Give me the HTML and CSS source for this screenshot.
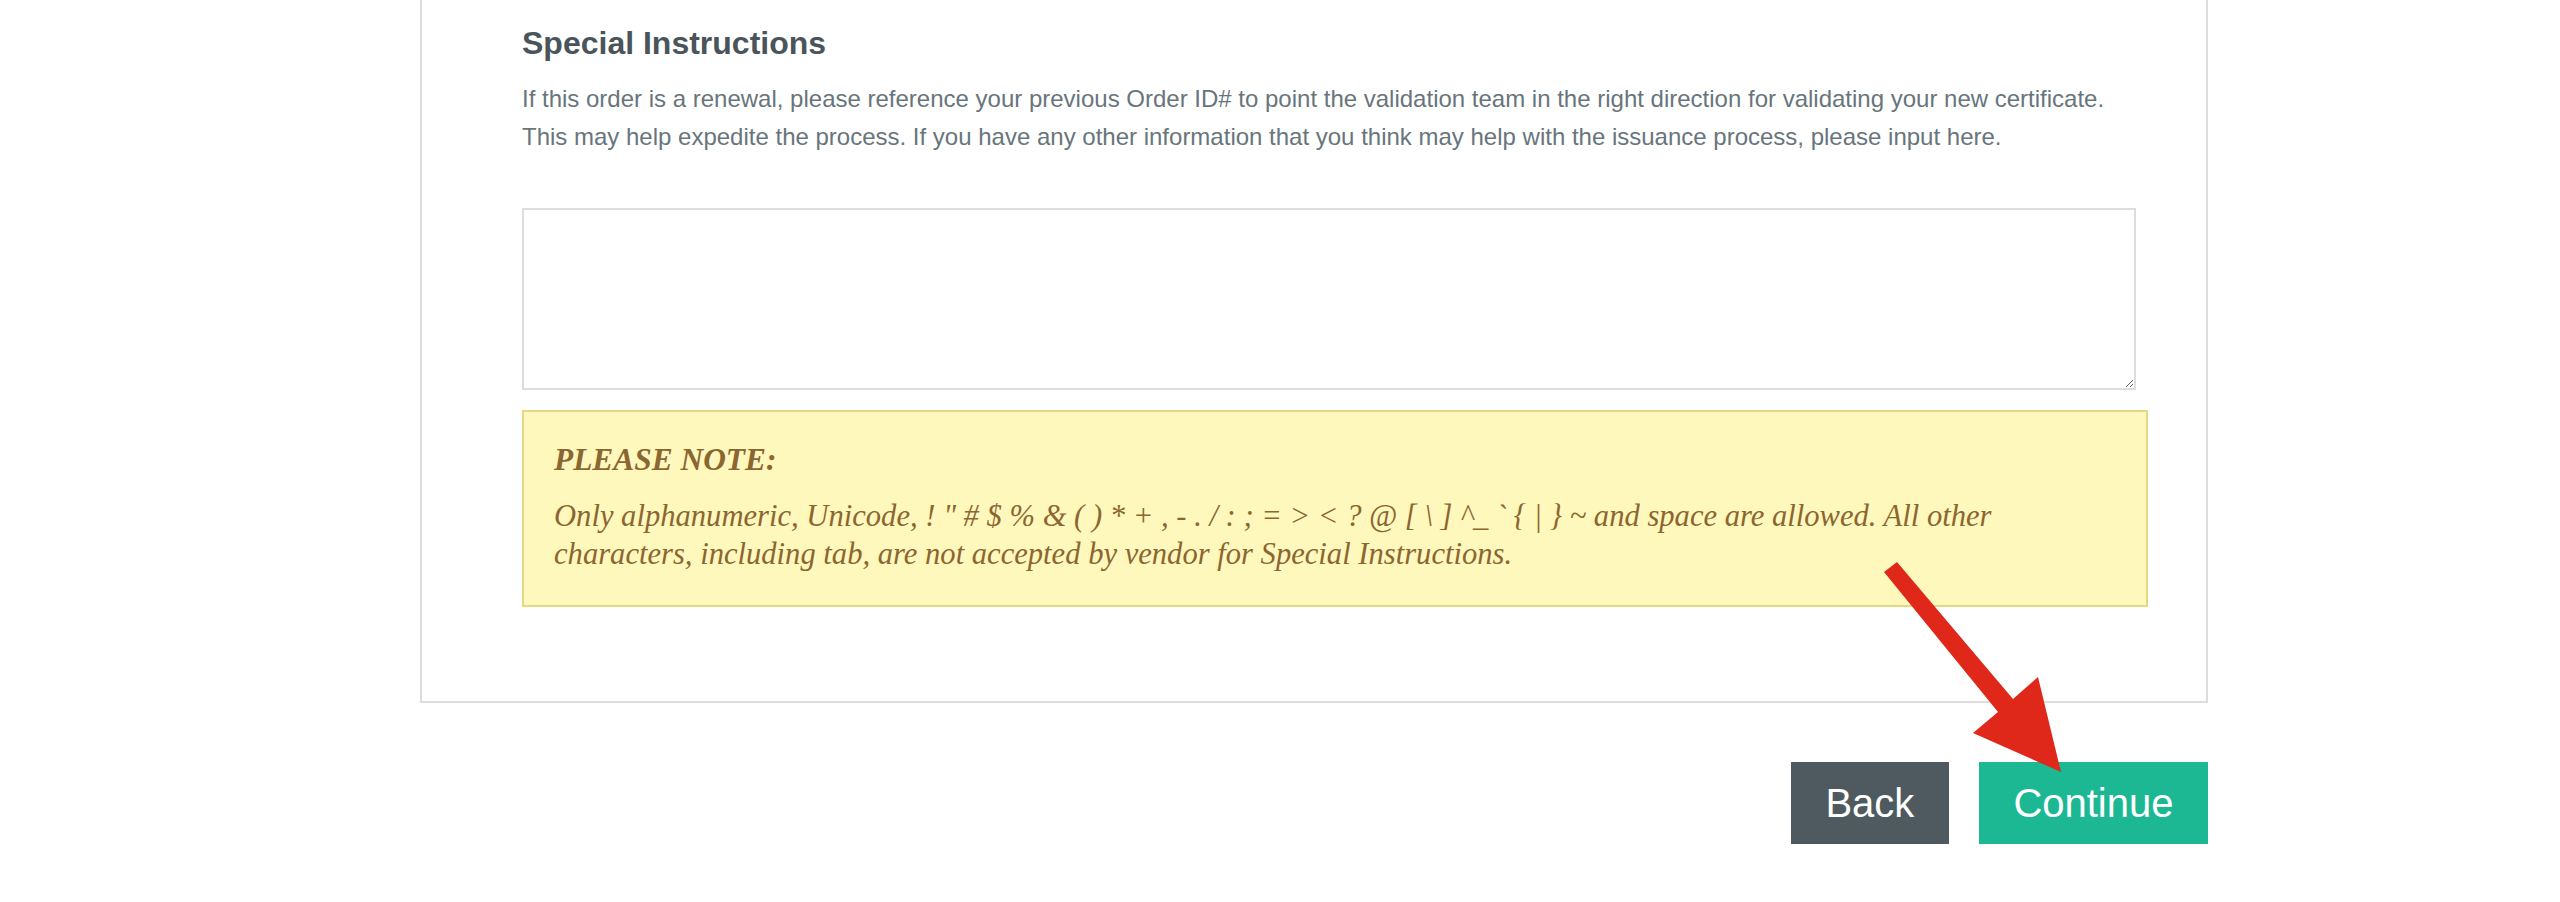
FILE: index.html
```html
<!DOCTYPE html>
<html lang="en">
<head>
<meta charset="utf-8">
<title>Special Instructions</title>
<link rel="stylesheet" href="styles.css">
</head>
<body>
<div class="page">
  <section class="card">
    <h2 class="card-title">Special Instructions</h2>
    <p class="card-text">If this order is a renewal, please reference your previous Order ID# to point the validation team in the right direction for validating your new certificate. This may help expedite the process. If you have any other information that you think may help with the issuance process, please input here.</p>
    <textarea class="instructions" aria-label="Special Instructions"></textarea>
    <div class="note">
      <p class="note-title">PLEASE NOTE:</p>
      <p class="note-text">Only alphanumeric, Unicode, ! " # $ % &amp; ( ) * + , - . / : ; = &gt; &lt; ? @ [ \ ] ^_ ` { | } ~ and space are allowed. All other characters, including tab, are not accepted by vendor for Special Instructions.</p>
    </div>
  </section>
  <div class="actions">
    <button class="btn btn-back" type="button">Back</button>
    <button class="btn btn-continue" type="button">Continue</button>
  </div>
  <svg class="arrow" width="200" height="230" viewBox="0 0 200 230" aria-hidden="true">
    <polygon points="14,22 27,12 143,149 168,127 191,222 103,183 128,162" fill="#e0281a"/>
  </svg>
</div>
</body>
</html>
```
FILE: styles.css
```css
* { box-sizing: border-box; }
html, body { margin: 0; padding: 0; background: #ffffff; }
body { font-family: "Liberation Sans", Arial, Helvetica, sans-serif; }

.page {
  position: relative;
  width: 2560px;
}

.card {
  margin-left: 420px;
  width: 1788px;
  border: 2px solid #dddddd;
  border-top: none;
  padding: 24px 58px 94px 100px;
  display: flex;
  flex-direction: column;
  align-items: flex-start;
}

.card-title {
  margin: 0 0 17.6px;
  font-size: 32px;
  line-height: 38.4px;
  font-weight: bold;
  color: #4a555b;
}

.card-text {
  margin: 0;
  width: 1626px;
  font-size: 24px;
  line-height: 38.4px;
  color: #68757c;
}

.instructions {
  display: block;
  margin-top: 51px;
  width: 1614px;
  height: 182px;
  border: 2px solid #dddddd;
  border-radius: 0;
  background: #ffffff;
  padding: 8px;
  font-family: "Liberation Sans", Arial, sans-serif;
  font-size: 24px;
  outline: none;
}

.note {
  margin-top: 20px;
  width: 1626px;
  background: #fef8bc;
  border: 2px solid #e4d980;
  padding: 29px 30px 31px 30px;
  font-family: "Liberation Serif", Georgia, serif;
  font-style: italic;
  color: #8c6630;
}

.note-title {
  margin: 0 0 17.5px;
  font-size: 31.4px;
  line-height: 38.4px;
  font-weight: bold;
}

.note-text {
  margin: 0;
  max-width: 1490px;
  font-size: 30.6px;
  line-height: 38.4px;
}

.actions {
  margin-left: 420px;
  width: 1788px;
  margin-top: 59px;
  display: flex;
  justify-content: flex-end;
  gap: 30px;
}

.btn {
  border: none;
  border-radius: 0;
  padding: 18px 34.5px;
  font-family: "Liberation Sans", Arial, Helvetica, sans-serif;
  font-size: 40px;
  line-height: 46px;
  color: #ffffff;
  cursor: pointer;
}

.btn-back { background: #4f5a60; }
.btn-continue { background: #1cb894; }

.arrow {
  position: absolute;
  left: 1870px;
  top: 550px;
}
```
